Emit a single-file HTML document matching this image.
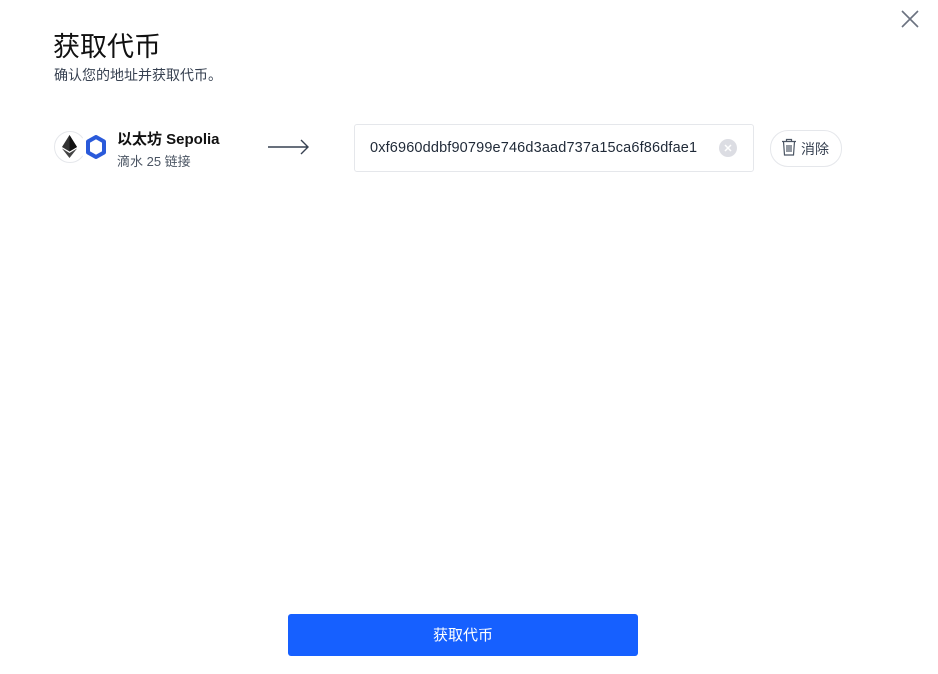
<!DOCTYPE html>
<html><head><meta charset="utf-8"><style>
body{margin:0;width:938px;height:674px;background:#fff;font-family:"Liberation Sans","Noto Sans CJK SC",sans-serif;position:relative;overflow:hidden}
.a{position:absolute}
</style></head><body>
<svg class="a" style="left:900px;top:9px" width="20" height="20" viewBox="0 0 20 20"><path d="M2 2L18 18M18 2L2 18" stroke="#6b7280" stroke-width="1.6"/></svg>
<div class="a" style="left:53px;top:25px;font-size:27px;color:#111">获取代币</div>
<div class="a" style="left:54px;top:65px;font-size:14px;color:#374151">确认您的地址并获取代币。</div>
<div class="a" style="left:54px;top:131px;width:30px;height:30px;border-radius:50%;border:1px solid #e5e7eb;background:#fff"></div>
<svg class="a" style="left:62px;top:135px" width="15" height="23" viewBox="0 0 15 23"><path d="M7.5 0L0 12l7.5 4.5L15 12z" fill="#333"/><path d="M7.5 0v16.5L15 12z" fill="#111"/><path d="M0 13.5l7.5 9.5 7.5-9.5-7.5 4.5z" fill="#444"/></svg>
<div class="a" style="left:80px;top:131px;width:32px;height:32px;border-radius:50%;background:#fff"></div>
<svg class="a" style="left:85px;top:135px" width="22" height="24" viewBox="0 0 22 24"><path d="M11 2L19 6.5V17.5L11 22L3 17.5V6.5Z" fill="none" stroke="#2a5ada" stroke-width="4" stroke-linejoin="round"/></svg>
<div class="a" style="left:117px;top:128px;font-size:15px;font-weight:bold;color:#111">以太坊 Sepolia</div>
<div class="a" style="left:117px;top:151px;font-size:13px;color:#4b5563">滴水 25 链接</div>
<svg class="a" style="left:268px;top:139px" width="42" height="16" viewBox="0 0 42 16"><path d="M0 8H40M33 1L40 8L33 15" stroke="#374151" stroke-width="1.4" fill="none"/></svg>
<div class="a" style="left:354px;top:124px;width:398px;height:46px;border:1px solid #e5e7eb;border-radius:3px"></div>
<div class="a" style="left:370px;top:140px;font-size:14.5px;color:#1f2937;letter-spacing:0.15px">0xf6960ddbf90799e746d3aad737a15ca6f86dfae1</div>
<div class="a" style="left:719px;top:139px;width:18px;height:18px;border-radius:50%;background:#dcdde3"></div>
<svg class="a" style="left:719px;top:139px" width="18" height="18"><path d="M6 6L12 12M12 6L6 12" stroke="#fff" stroke-width="1.5"/></svg>
<div class="a" style="left:770px;top:130px;width:70px;height:35px;border:1px solid #e5e7eb;border-radius:18px"></div>
<svg class="a" style="left:781px;top:138px" width="16" height="18" viewBox="0 0 16 18"><path d="M1 3.5H15M5.5 3.5V1.5H10.5V3.5M2.5 3.5L3.5 17H12.5L13.5 3.5M6 7V14M8 7V14M10 7V14" stroke="#4b5563" stroke-width="1.2" fill="none"/></svg>
<div class="a" style="left:801px;top:139px;font-size:14px;color:#374151">消除</div>
<div class="a" style="left:288px;top:614px;width:350px;height:42px;background:#1660ff;border-radius:3px;color:#fff;font-size:15px;text-align:center;line-height:44px">获取代币</div>
</body></html>
